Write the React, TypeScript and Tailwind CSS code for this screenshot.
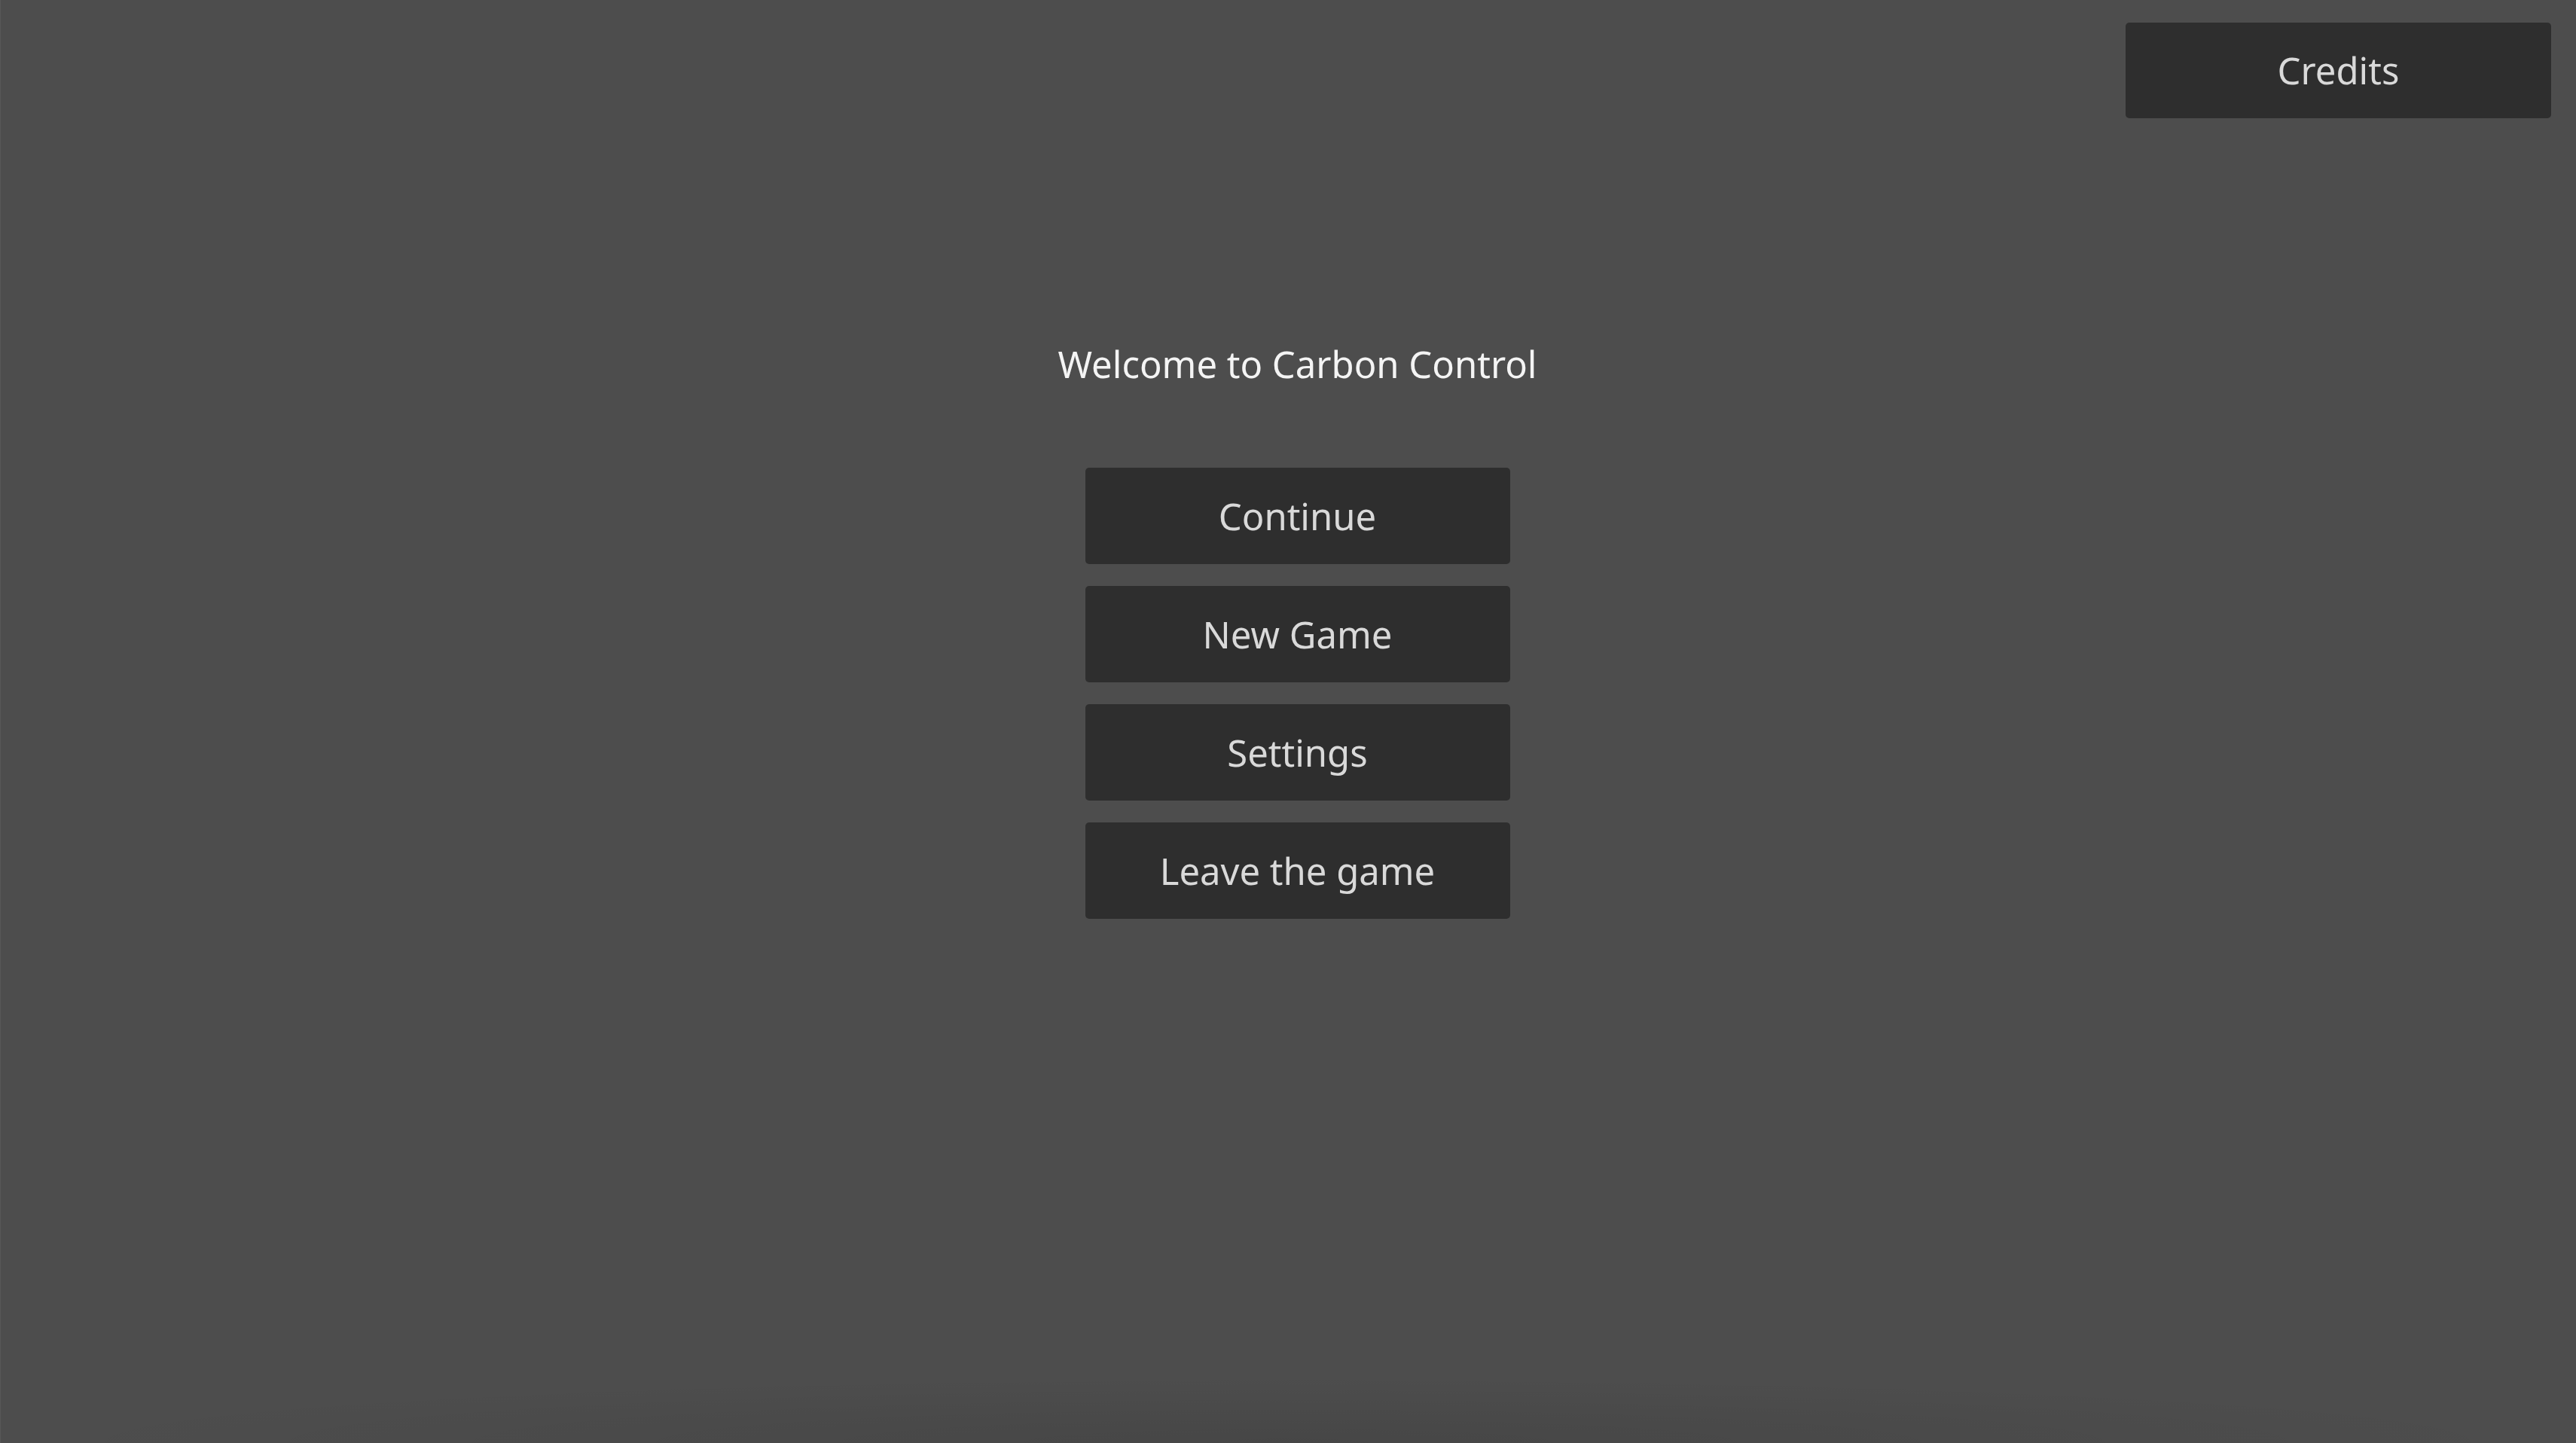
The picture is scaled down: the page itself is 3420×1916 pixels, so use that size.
const menuItems = ['Continue', 'New Game', 'Settings', 'Leave the game']

function MenuButton({ label, className = '' }: { label: string; className?: string }) {
  return (
    <button
      className={
        'flex items-center justify-center rounded-[5px] bg-[#2e2e2e] text-[49px] leading-none text-[#d9d9d9] ' +
        className
      }
    >
      {label}
    </button>
  )
}

export default function App() {
  return (
    <div className="relative flex h-screen w-full flex-col overflow-hidden border-l border-[#585858] bg-[#4d4d4d] font-['Noto_Sans',sans-serif]">
      <div className="flex justify-end pt-[30px] pr-[33px]">
        <MenuButton label="Credits" className="h-[127px] w-[565px]" />
      </div>

      <div className="mt-[293px] flex flex-col items-center pl-[24px]">
        <h1 className="text-[49px] leading-[67px] text-[#f4f4f4]">Welcome to Carbon Control</h1>
        <div className="mt-[104px] flex flex-col gap-[29px]">
          {menuItems.map((item) => (
            <MenuButton key={item} label={item} className="h-[128px] w-[564px]" />
          ))}
        </div>
      </div>

      <div className="pointer-events-none absolute inset-x-0 bottom-0 h-[90px] bg-[radial-gradient(ellipse_at_bottom,rgba(0,0,0,0.09),transparent_70%)]" />
    </div>
  )
}
